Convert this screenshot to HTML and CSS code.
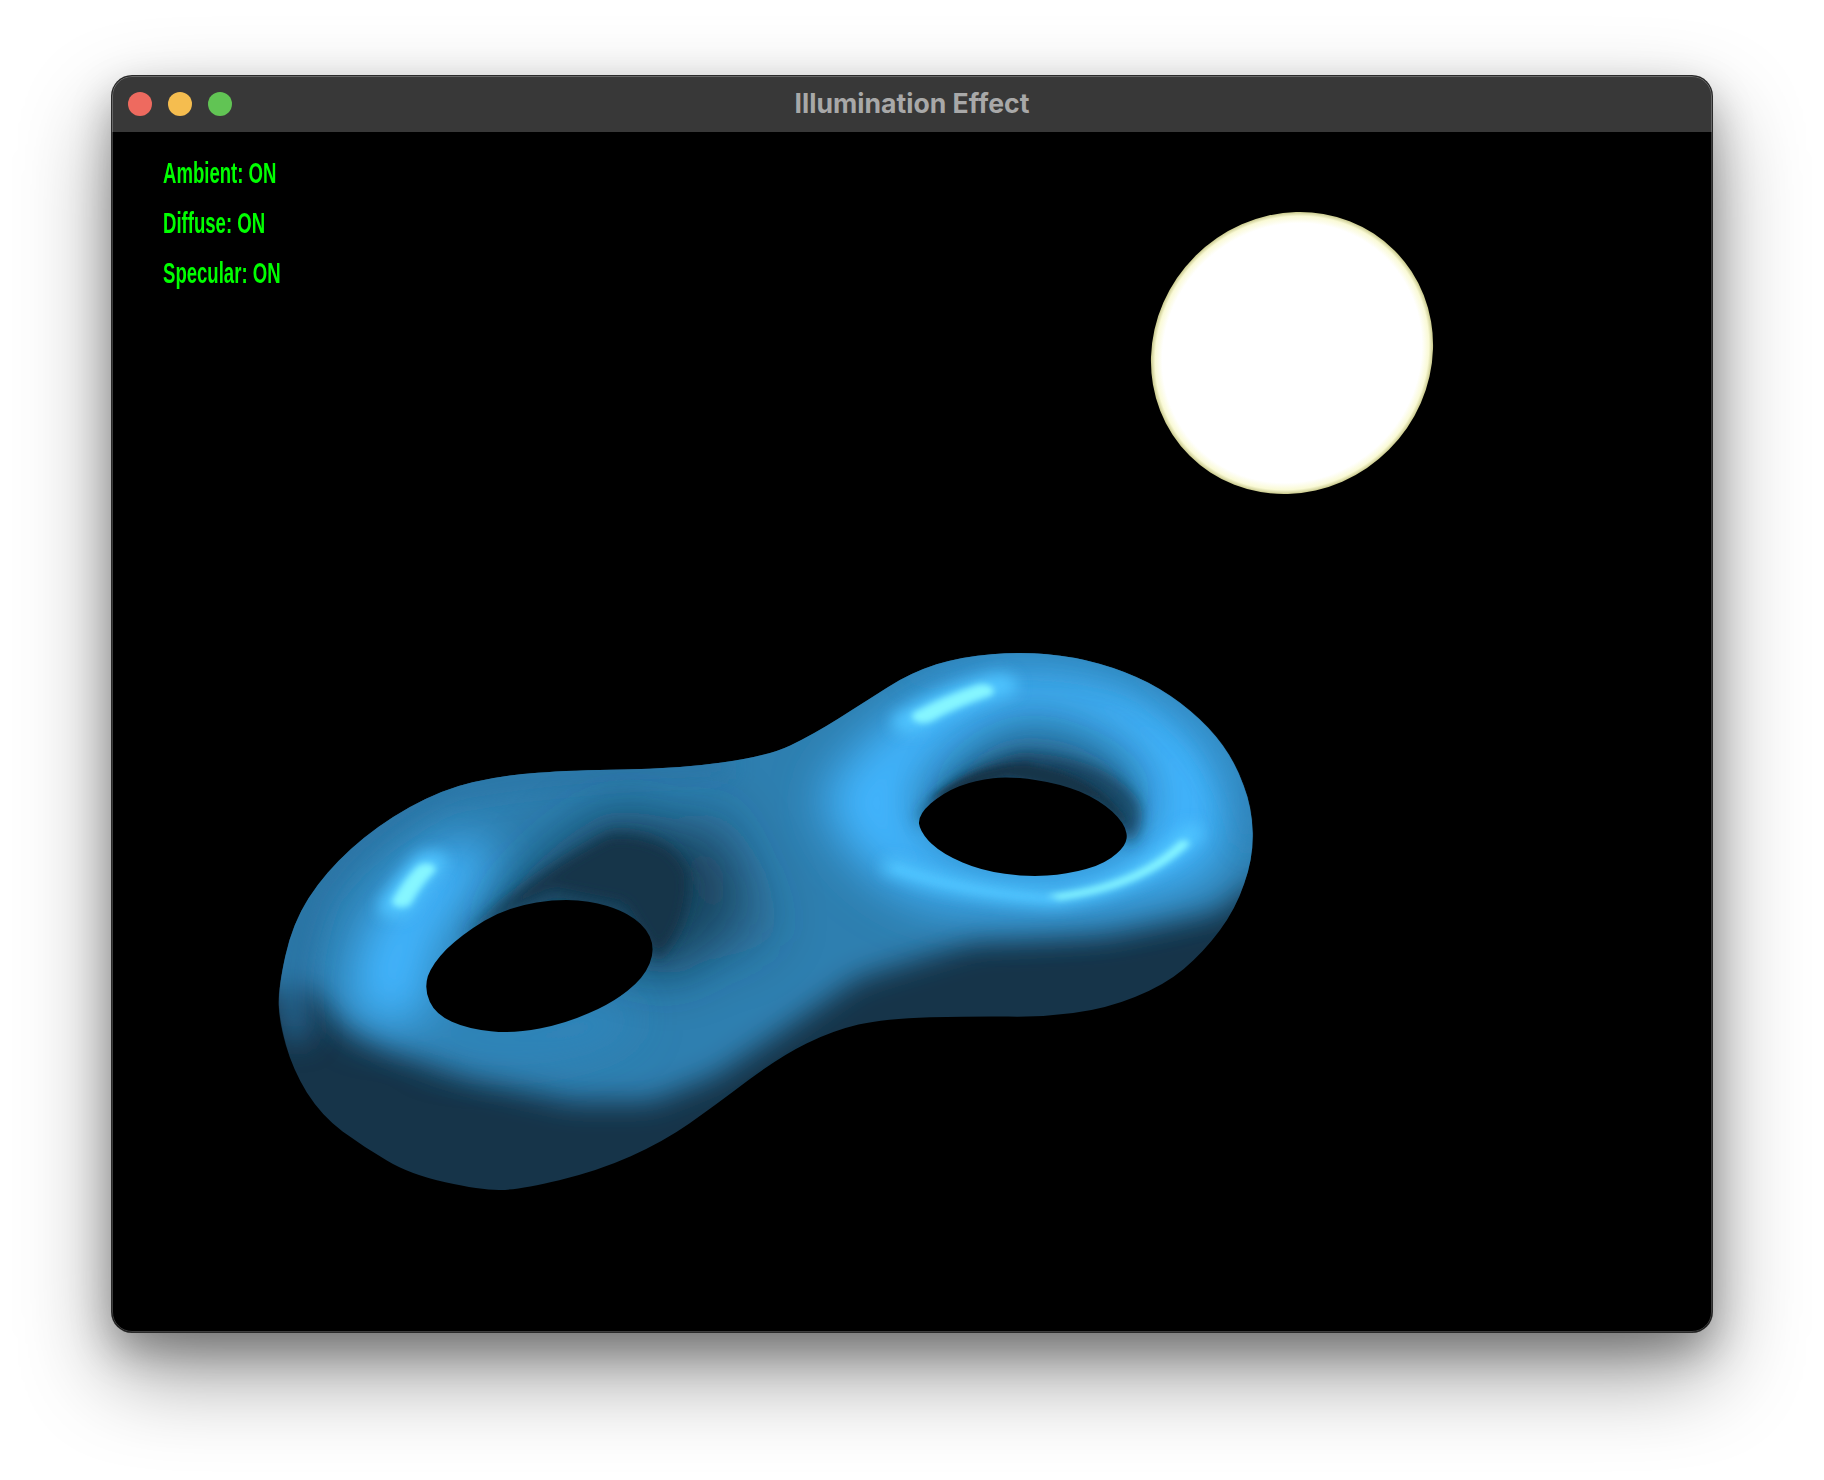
FILE: index.html
```html
<!DOCTYPE html>
<html lang="en">
<head>
<meta charset="utf-8">
<title>Illumination Effect</title>
<link rel="stylesheet" href="styles.css">
</head>
<body>
<main class="window">
  <header class="titlebar">
    <div class="lights">
      <span class="light light-close"></span>
      <span class="light light-min"></span>
      <span class="light light-max"></span>
    </div>
    <h1 class="title">Illumination Effect</h1>
  </header>
  <section class="scene">
    <svg class="sphere" viewBox="0 0 300 300" aria-hidden="true">
      <defs>
        <radialGradient id="sphereFill" cx="50%" cy="50%" r="50%">
          <stop offset="0" stop-color="#ffffff"/>
          <stop offset="0.92" stop-color="#ffffff"/>
          <stop offset="0.97" stop-color="#fafad6"/>
          <stop offset="1" stop-color="#c8c88c"/>
        </radialGradient>
      </defs>
      <ellipse cx="150" cy="150" rx="145" ry="137" fill="url(#sphereFill)" transform="rotate(-45 150 150)"/>
    </svg>
    <svg class="blob" viewBox="0 0 1568 1568" preserveAspectRatio="none" aria-hidden="true">
      <defs>
        <clipPath id="outline">
          <path d="M1210 39Q1250 45 1290 65Q1330 85 1365 117Q1400 150 1430 195Q1460 240 1480 290Q1500 340 1512 400Q1525 460 1526 530Q1527 600 1513 670Q1500 740 1475 800Q1450 860 1420 905Q1390 950 1345 982Q1300 1015 1250 1026Q1200 1038 1150 1036Q1100 1035 1030 1038Q960 1042 920 1058Q880 1075 840 1110Q800 1145 750 1212Q700 1280 660 1330Q620 1380 570 1420Q520 1460 460 1486Q400 1512 370 1513Q340 1514 285 1492Q230 1470 195 1432Q160 1395 127 1352Q95 1310 72 1245Q50 1180 40 1115Q30 1050 29 1005Q28 960 39 870Q50 780 75 710Q100 640 140 575Q180 510 230 460Q280 410 327 391Q375 372 427 365Q480 358 560 356Q640 355 710 337Q780 320 815 290Q850 260 890 215Q930 170 965 130Q1000 90 1040 67Q1080 45 1125 39Q1170 33 1210 39Z"/>
        </clipPath>
        <filter id="blurLg" filterUnits="userSpaceOnUse" x="-300" y="-300" width="2200" height="2200"><feGaussianBlur stdDeviation="38 68"/></filter>
        <filter id="blurMd" filterUnits="userSpaceOnUse" x="-300" y="-300" width="2200" height="2200"><feGaussianBlur stdDeviation="22 40"/></filter>
        <filter id="blurSm" filterUnits="userSpaceOnUse" x="-300" y="-300" width="2200" height="2200"><feGaussianBlur stdDeviation="11 20"/></filter>
        <filter id="blurXs" filterUnits="userSpaceOnUse" x="-300" y="-300" width="2200" height="2200"><feGaussianBlur stdDeviation="5 9"/></filter>
      </defs>
      <g clip-path="url(#outline)">
        <rect class="shade-base" width="1568" height="1568"/>
        <path class="shade-mid" filter="url(#blurMd)" d="M-200 -200H1800V620L1527 670L1470 750L1300 810L1100 830L920 930L800 1080L700 1200L600 1270L480 1270L330 1210L200 1130L130 1060L80 960H-200Z"/>
        <g filter="url(#blurLg)" fill="none" stroke-linecap="round" stroke-linejoin="round">
          <path class="stroke-bright" stroke-width="120" d="M200 1000Q190 800 310 620"/>
          <path class="stroke-soft" stroke-width="70" d="M290 1090Q420 1130 540 1040"/>
          <path class="stroke-bright" stroke-width="130" d="M930 430Q1010 230 1130 150Q1280 110 1390 280Q1450 420 1410 600Q1270 710 1050 660Q960 590 930 430Z"/>
        </g>
        <g filter="url(#blurMd)" fill="none">
          <path class="edge-dim" stroke-width="44" d="M60 1100Q30 950 75 710Q130 550 280 410Q480 345 720 340"/>
          <path class="edge-dim edge-faint" stroke-width="34" d="M1000 90Q1170 10 1350 100Q1500 280 1530 560"/>
        </g>
        <g filter="url(#blurLg)">
          <path class="shade-dark" opacity="0.75" d="M350 790Q430 560 540 470Q670 470 730 640Q740 820 640 930Z"/>
          <path class="shade-dark" opacity="0.3" d="M700 420Q780 640 800 800L720 900L640 600Z"/>
          <path class="shade-dark" opacity="0.35" d="M1040 450Q1090 290 1180 260Q1310 290 1370 450Z"/>
        </g>
        <g filter="url(#blurSm)">
          <path class="shade-dark" d="M310 820Q420 640 540 530Q640 530 660 650Q660 800 610 880L560 730L450 690Z"/>
          <path class="shade-dark" opacity="0.7" d="M1005 500Q1060 350 1170 310Q1300 320 1350 440Q1365 500 1340 560L1200 360Z"/>
        </g>
        <g filter="url(#blurXs)">
          <path class="shade-dark" d="M1030 440Q1100 340 1180 340Q1290 370 1335 510L1290 440L1150 375Z"/>
        </g>
        <g filter="url(#blurSm)" fill="none" stroke-linecap="round">
          <path class="stroke-glow" stroke-width="54" d="M208 735Q235 660 262 610"/>
          <path class="stroke-glow" stroke-width="60" d="M1000 225Q1060 160 1135 125"/>
          <path class="stroke-glow" stroke-width="40" d="M975 625Q1080 695 1220 712Q1350 680 1432 530"/>
        </g>
        <g filter="url(#blurXs)" fill="none" stroke-linecap="round">
          <path class="stroke-hot" stroke-width="30" d="M218 720Q235 665 255 630"/>
          <path class="stroke-hot" stroke-width="36" d="M1020 210Q1060 170 1110 140"/>
          <path class="stroke-hot" stroke-width="18" d="M1220 708Q1350 680 1420 560"/>
          <path class="stroke-glow" stroke-width="12" d="M980 630Q1080 695 1220 712"/>
        </g>
      </g>
      <path class="hole" d="M505 720Q540 730 565 755Q590 780 599 815Q608 850 599 890Q590 930 565 965Q540 1000 505 1027Q470 1055 430 1069Q390 1083 355 1076Q320 1070 295 1050Q270 1030 261 995Q252 960 258 925Q265 890 287 850Q310 810 345 772Q380 735 425 722Q470 710 505 720Z"/>
      <path class="hole" d="M1192 385Q1230 395 1260 417Q1290 440 1310 472Q1330 505 1332 532Q1335 560 1317 587Q1300 615 1270 630Q1240 645 1210 648Q1180 652 1145 643Q1110 635 1080 612Q1050 590 1032 560Q1015 530 1013 505Q1012 480 1031 450Q1050 420 1075 402Q1100 385 1127 380Q1155 375 1192 385Z"/>
    </svg>
    <ul class="status">
      <li class="status-line">Ambient: ON</li>
      <li class="status-line">Diffuse: ON</li>
      <li class="status-line">Specular: ON</li>
    </ul>
  </section>
</main>
</body>
</html>
```

FILE: styles.css
```css
* { box-sizing: border-box; }

html, body { margin: 0; height: 100%; background: #ffffff; }

body {
  padding: 76px 0 0 112px;
  overflow: hidden;
}

.window {
  position: relative;
  display: flex;
  flex-direction: column;
  width: 1600px;
  height: 1256px;
  border-radius: 20px;
  overflow: hidden;
  background: #000;
  box-shadow:
    0 0 0 1px #2a2a2a,
    0 18px 40px rgba(0, 0, 0, 0.28),
    0 40px 90px rgba(0, 0, 0, 0.42);
}

.window::after {
  content: "";
  position: absolute;
  inset: 0;
  border: 1px solid rgba(255, 255, 255, 0.24);
  border-radius: 20px;
  pointer-events: none;
}

.titlebar {
  position: relative;
  display: flex;
  align-items: center;
  justify-content: center;
  flex: 0 0 56px;
  background: #383838;
}

.lights {
  position: absolute;
  left: 16px;
  display: flex;
  gap: 16px;
}

.light { width: 24px; height: 24px; border-radius: 50%; }
.light-close { background: #ee6a5f; }
.light-min { background: #f5bd4f; }
.light-max { background: #61c454; }

.title {
  margin: 0 0 3px;
  font: 700 26.6px "Inter", "Liberation Sans", sans-serif;
  color: #a8a8a8;
}

.scene {
  position: relative;
  flex: 1;
}

.sphere {
  position: absolute;
  left: 1030px;
  top: 71px;
  width: 300px;
  height: 300px;
}

.blob {
  position: absolute;
  left: 148px;
  top: 508px;
  width: 1020px;
  height: 570px;
}

.shade-base, .shade-dark { fill: #163449; }
.shade-mid { fill: #2f7fb0; }
.stroke-bright { stroke: #42b6ff; }
.stroke-soft { stroke: #3390cb; opacity: 0.7; }
.stroke-glow { stroke: #4fc4ff; }
.stroke-hot { stroke: #86f6ff; }
.edge-dim { stroke: #286f9e; opacity: 0.85; }
.edge-faint { stroke: #2f86bf; opacity: 0.5; }
.hole { fill: #000; }

.status {
  position: relative;
  display: flex;
  flex-direction: column;
  gap: 16px;
  margin: 0;
  padding: 24px 0 0 51px;
  list-style: none;
}

.status-line {
  height: 34px;
  font: 700 29px/34px "Liberation Sans Narrow", "Liberation Sans", sans-serif;
  color: #00ff00;
  transform: scaleX(0.64);
  transform-origin: left center;
}
```
